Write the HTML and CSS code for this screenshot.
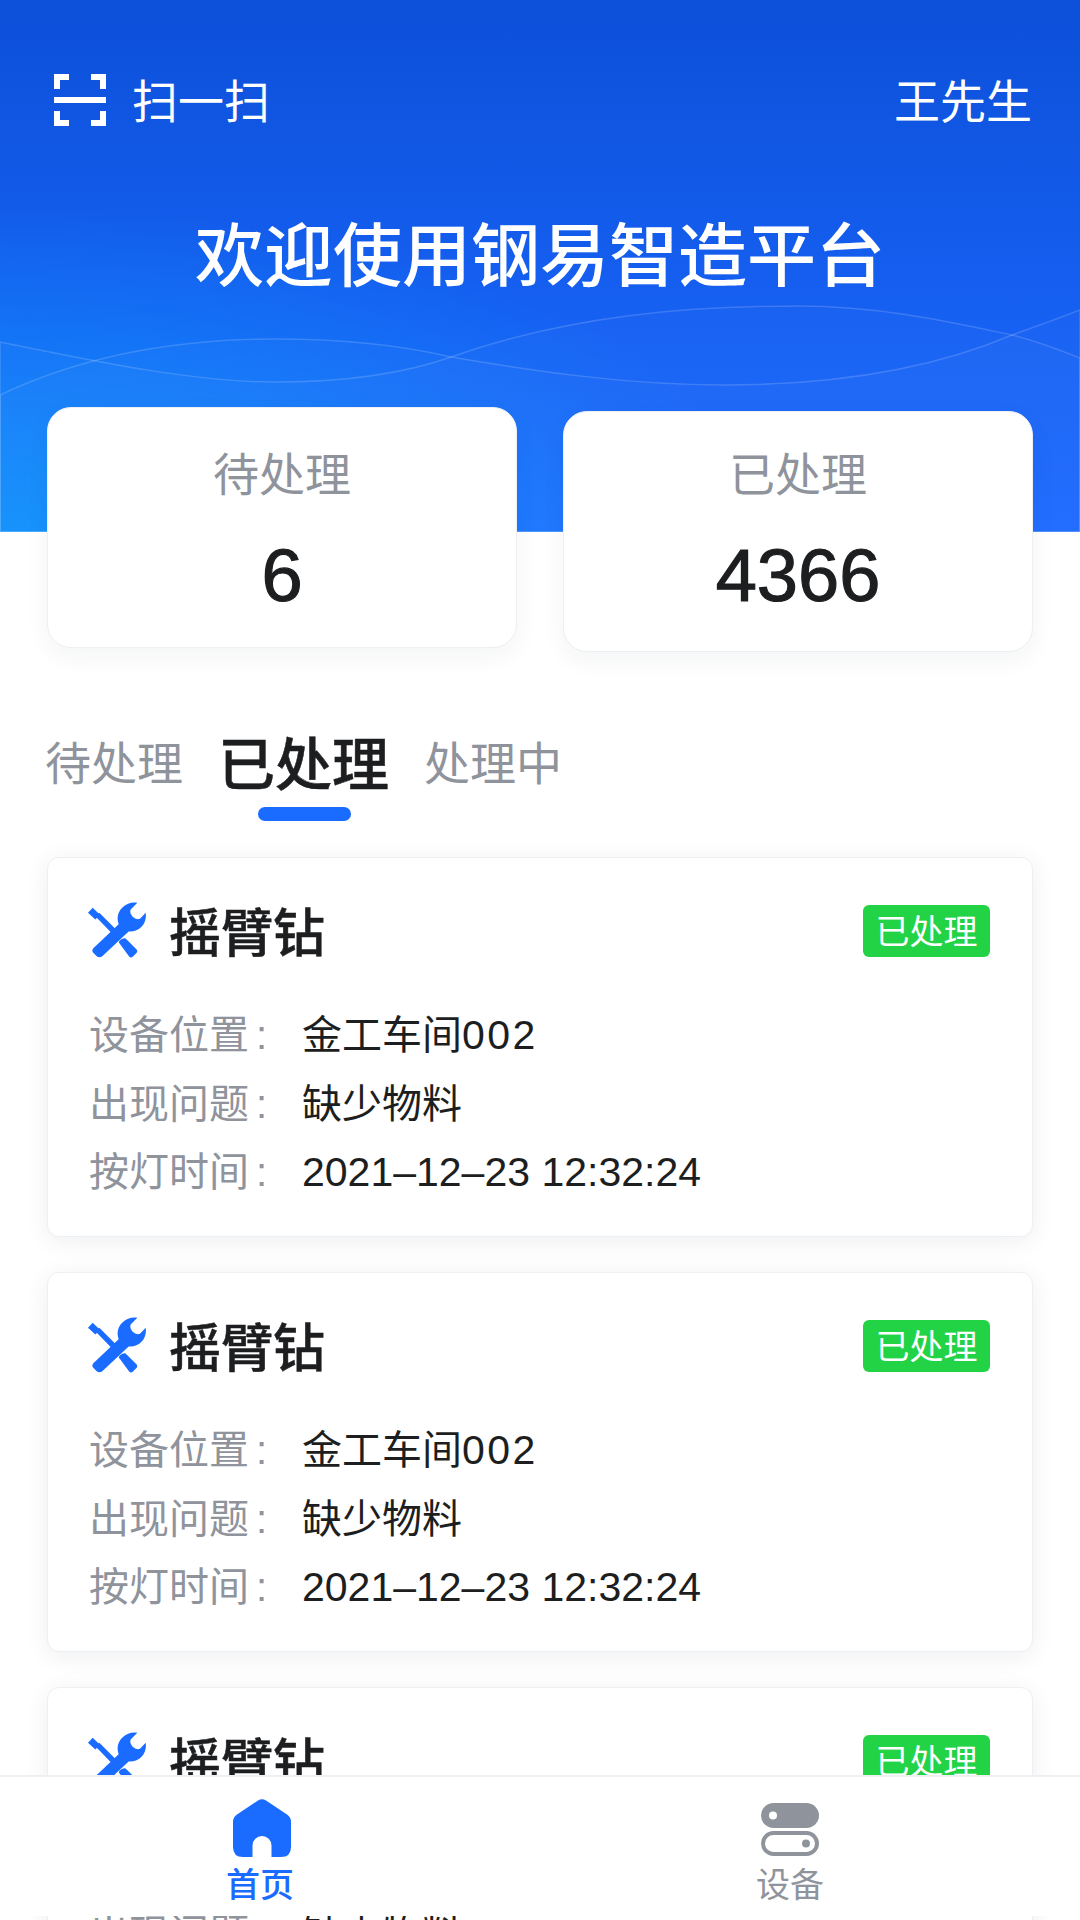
FILE: index.html
```html
<!DOCTYPE html>
<html lang="zh-CN">
<head>
    <meta charset="UTF-8">
    <meta name="viewport" content="width=device-width, initial-scale=1.0">
    <title>钢易智造平台</title>
    <link rel="stylesheet" href="styles.css">
</head>
<body>
    <div class="wrap">
        <div class="top">
            <svg class="waves" viewBox="0 0 1080 532" preserveAspectRatio="none">
                <path class="wave" d="M0 342C90 360 190 382 275 382C340 382 400 375 451 357C570 315 690 306 799 306C880 306 950 322 1012 335C1040 342 1060 350 1080 358V532H0Z"/>
                <path class="wave" d="M0 395C90 352 190 339 275 339C340 339 400 345 451 357C540 372 630 385 723 385C830 385 930 370 1012 335C1040 325 1060 318 1080 310V532H0Z"/>
            </svg>
            <div class="top-bar">
                <div class="scan">
                    <svg class="scan-icon" viewBox="0 0 52 52">
                        <path d="M15 3H3V15M37 3H49V15M15 49H3V37M37 49H49V37" fill="none" stroke="#fff" stroke-width="6"/>
                        <rect x="0" y="23" width="52" height="6" fill="#fff"/>
                    </svg>
                    <span>扫一扫</span>
                </div>
                <span>王先生</span>
            </div>
            <h1 class="welcome">欢迎使用钢易智造平台</h1>
        </div><!--top-->

        <div class="stats">
            <div class="stat">
                <div class="stat-name">待处理</div>
                <div class="stat-num">6</div>
            </div>
            <div class="stat stat-low">
                <div class="stat-name">已处理</div>
                <div class="stat-num">4366</div>
            </div>
        </div><!--stats-->

        <div class="tabs">
            <span class="tab">待处理</span>
            <span class="tab on">已处理</span>
            <span class="tab">处理中</span>
        </div>

        <div class="list">
            <div class="card">
                <div class="card-head">
                    <svg class="tool-icon" viewBox="55 38 180 170"><use href="#tool"/></svg>
                    <strong class="card-name">摇臂钻</strong>
                    <span class="badge">已处理</span>
                </div>
                <div class="row"><span class="row-key">设备位置<i>:</i></span><span>金工车间<b class="row-num">002</b></span></div>
                <div class="row"><span class="row-key">出现问题<i>:</i></span><span>缺少物料</span></div>
                <div class="row"><span class="row-key">按灯时间<i>:</i></span><span class="row-date">2021–12–23 12:32:24</span></div>
            </div>
            <div class="card">
                <div class="card-head">
                    <svg class="tool-icon" viewBox="55 38 180 170"><use href="#tool"/></svg>
                    <strong class="card-name">摇臂钻</strong>
                    <span class="badge">已处理</span>
                </div>
                <div class="row"><span class="row-key">设备位置<i>:</i></span><span>金工车间<b class="row-num">002</b></span></div>
                <div class="row"><span class="row-key">出现问题<i>:</i></span><span>缺少物料</span></div>
                <div class="row"><span class="row-key">按灯时间<i>:</i></span><span class="row-date">2021–12–23 12:32:24</span></div>
            </div>
            <div class="card">
                <div class="card-head">
                    <svg class="tool-icon" viewBox="55 38 180 170"><use href="#tool"/></svg>
                    <strong class="card-name">摇臂钻</strong>
                    <span class="badge">已处理</span>
                </div>
                <div class="row"><span class="row-key">设备位置<i>:</i></span><span>金工车间<b class="row-num">002</b></span></div>
                <div class="row"><span class="row-key">出现问题<i>:</i></span><span>缺少物料</span></div>
                <div class="row"><span class="row-key">按灯时间<i>:</i></span><span class="row-date">2021–12–23 12:32:24</span></div>
            </div>
        </div><!--list-->

        <div class="nav">
            <div class="nav-item on">
                <svg class="nav-icon" viewBox="0 0 58 58">
                    <path fill="#1a6bff" d="M25 1.5Q29 -1 33 1.5L54 15.5Q58 18 58 23V48Q58 58 48 58H38.500V46.500A9.500 9.500 0 0 0 19.500 46.500V58H10Q0 58 0 48V23Q0 18 4 15.500Z"/>
                </svg>
                <span>首页</span>
            </div>
            <div class="nav-item">
                <svg class="nav-icon" viewBox="0 0 58 58">
                    <rect x="0" y="4" width="58" height="25" rx="12.500" fill="#8f939c"/>
                    <circle cx="12" cy="16.500" r="4" fill="#fff"/>
                    <rect x="2" y="34" width="54" height="21" rx="10.500" fill="none" stroke="#8f939c" stroke-width="4"/>
                    <circle cx="45" cy="44.500" r="4" fill="#8f939c"/>
                </svg>
                <span>设备</span>
            </div>
        </div><!--nav-->
    </div><!--wrap-->

    <svg class="defs" width="0" height="0">
        <defs>
            <g id="tool" fill="#1a6bff">
                <path d="M58 70L72 55L94 76L80 90Z"/>
                <path d="M80 80L92 70L140 118L128 130Z"/>
                <path d="M150 158Q156 146 170 146L204 180Q208 185 204 190L192 202Q187 206 182 202Z"/>
                <path d="M206 40L186 60Q182 72 192 82Q202 92 214 88L231 70C236 100 215 128 180 126L100 201Q92 206 84 200L74 190Q68 184 74 176L150 104C136 68 170 34 206 40Z"/>
            </g>
        </defs>
    </svg>
</body>
</html>
```

FILE: styles.css
```css
*{
    margin : 0;
    padding : 0;
    box-sizing : border-box;
}
html, body{
    width : 1080px;
    height : 1920px;
    overflow : hidden;
    background-color : #fff;
}
body{
    font-family : "Liberation Sans", "Noto Sans CJK SC", sans-serif;
    color : #1d1e20;
}
.wrap{
    position : relative;
    height : 1920px;
    overflow : hidden;
}
.defs{
    position : absolute;
}

/* top blue area */
.top{
    position : relative;
    height : 532px;
    padding : 66px 48px 0 54px;
    color : #fff;
    background : radial-gradient(ellipse 760px 330px at 0 532px, #0f8ffb 0%, rgba(15,143,251,0) 100%),
                linear-gradient(180deg, #0c50d9 0%, #1660f2 60%, #1b6aff 100%);
}
.waves{
    position : absolute;
    left : 0;
    top : 0;
    width : 1080px;
    height : 532px;
}
.wave{
    fill : rgba(255,255,255,.018);
    stroke : rgba(255,255,255,.16);
    stroke-width : 1.5;
}
.top-bar{
    position : relative;
    display : flex;
    justify-content : space-between;
    align-items : center;
    height : 64px;
    font-size : 46px;
}
.scan{
    display : flex;
    align-items : center;
    gap : 26px;
}
.scan-icon{
    width : 52px;
    height : 52px;
    margin-top : 4px;
}
.welcome{
    position : relative;
    margin-top : 78px;
    margin-left : -6px;
    text-align : center;
    font-size : 69px;
    font-weight : 500;
    line-height : 100px;
}

/* two count cards */
.stats{
    position : relative;
    display : flex;
    align-items : flex-start;
    justify-content : space-between;
    padding : 0 47px;
    margin-top : -125px;
}
.stat{
    width : 470px;
    height : 241px;
    padding-top : 35px;
    background-color : #fff;
    border : 1px solid #eeeff3;
    border-radius : 24px;
    box-shadow : 0 8px 24px rgba(20,30,60,.05);
    text-align : center;
}
.stat-low{
    margin-top : 4px;
    padding-top : 31px;
}
.stat-name{
    line-height : 64px;
    font-size : 46px;
    color : #8f939c;
}
.stat-num{
    margin-top : 24px;
    line-height : 90px;
    font-size : 74px;
    -webkit-text-stroke : 1.2px #1d1e20;
}

/* tabs */
.tabs{
    display : flex;
    align-items : center;
    gap : 35px;
    margin-top : 68px;
    padding-left : 45px;
    height : 80px;
    font-size : 46px;
    color : #8f939c;
}
.tab.on{
    position : relative;
    font-size : 57px;
    font-weight : 500;
    color : #1d1e20;
    -webkit-text-stroke : .5px #1d1e20;
}
.tab.on::after{
    content : "";
    position : absolute;
    left : 40px;
    bottom : -20px;
    width : 93px;
    height : 14px;
    border-radius : 7px;
    background-color : #1a6bff;
}

/* list */
.list{
    display : flex;
    flex-direction : column;
    gap : 35px;
    margin-top : 57px;
    padding : 0 47px;
}
.card{
    height : 380px;
    padding : 42px 42px 0 41px;
    background-color : #fff;
    border : 1px solid #eeeff3;
    border-radius : 12px;
    box-shadow : 0 4px 24px rgba(20,30,60,.07);
}
.card-head{
    display : flex;
    align-items : center;
    height : 60px;
    margin-bottom : 41px;
}
.tool-icon{
    width : 60px;
    height : 57px;
    margin-left : -2px;
    flex-shrink : 0;
}
.card-name{
    margin-left : 22px;
    margin-top : -2px;
    font-size : 52px;
    font-weight : 500;
    -webkit-text-stroke : .5px #1d1e20;
}
.badge{
    margin-left : auto;
    margin-top : 2px;
    width : 127px;
    height : 52px;
    line-height : 54px;
    text-align : center;
    font-size : 34px;
    color : #fff;
    background-color : #22d345;
    border-radius : 6px;
}
.row{
    display : flex;
    height : 68.500px;
    line-height : 68.500px;
    font-size : 40px;
}
.row-key{
    width : 213px;
    color : #8f939c;
}
.row-key i{
    margin-left : 7px;
    font-style : normal;
}
.row-num{
    font-weight : 400;
    font-size : 41px;
    letter-spacing : 2.500px;
}
.row-date{
    font-size : 41px;
}

/* bottom nav */
.nav{
    position : absolute;
    left : 0;
    right : 0;
    bottom : 4px;
    height : 141px;
    display : flex;
    gap : 446px;
    padding-left : 218px;
    padding-top : 22px;
    background-color : #fff;
    border-top : 2px solid #eeeff3;
}
.nav-item{
    width : 84px;
    display : flex;
    flex-direction : column;
    align-items : center;
    font-size : 34px;
    line-height : 56px;
    color : #8f939c;
}
.nav-item.on{
    color : #1a6bff;
    font-weight : 500;
}
.nav-item.on .nav-icon{
    margin-left : 3px;
}
.nav-icon{
    width : 58px;
    height : 58px;
    flex-shrink : 0;
}
```
